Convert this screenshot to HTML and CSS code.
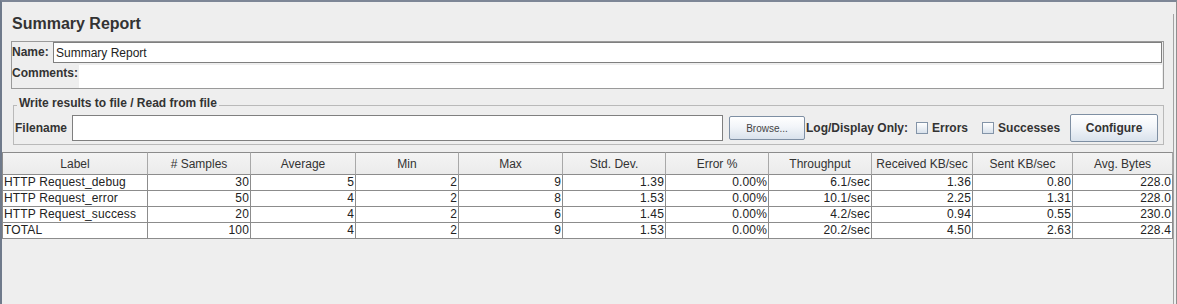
FILE: index.html
```html
<!DOCTYPE html>
<html>
<head>
    <title>Summary Report</title>
    <meta charset="utf-8">
    <link rel="stylesheet" href="styles.css">
</head>
<body>
    <div class="window">
        <div class="content">
            <div class="top-panel">
                <h1 class="title">Summary Report</h1>
                <div class="name-box">
                    <div class="name-row">
                        <label class="field-label name-label">Name:</label>
                        <input type="text" class="name-input" value="Summary Report">
                    </div>
                    <div class="comments-row">
                        <label class="field-label comments-label">Comments:</label>
                        <div class="comments-field"></div>
                    </div>
                </div>
                <fieldset class="file-box">
                    <legend>Write results to file / Read from file</legend>
                    <div class="file-row">
                        <label class="field-label file-label">Filename</label>
                        <input type="text" class="file-input">
                        <button class="btn browse-btn">Browse...</button>
                        <span class="field-label log-label">Log/Display Only:</span>
                        <label class="check errors-check"><span class="check-box"></span>Errors</label>
                        <label class="check success-check"><span class="check-box"></span>Successes</label>
                        <button class="btn configure-btn">Configure</button>
                    </div>
                </fieldset>
            </div>

            <div class="table-pane">
                <table class="results">
                    <colgroup>
                        <col style="width: 146px">
                        <col style="width: 103px">
                        <col style="width: 105px">
                        <col style="width: 103px">
                        <col style="width: 104px">
                        <col style="width: 103px">
                        <col style="width: 103px">
                        <col style="width: 103px">
                        <col style="width: 101px">
                        <col style="width: 100px">
                        <col style="width: 100px">
                    </colgroup>
                    <thead>
                        <tr>
                            <th>Label</th>
                            <th># Samples</th>
                            <th>Average</th>
                            <th>Min</th>
                            <th>Max</th>
                            <th>Std. Dev.</th>
                            <th>Error %</th>
                            <th>Throughput</th>
                            <th>Received KB/sec</th>
                            <th>Sent KB/sec</th>
                            <th>Avg. Bytes</th>
                        </tr>
                    </thead>
                    <tbody>
                        <tr>
                            <td class="label-cell">HTTP Request_debug</td>
                            <td>30</td><td>5</td><td>2</td><td>9</td><td>1.39</td>
                            <td>0.00%</td><td>6.1/sec</td><td>1.36</td><td>0.80</td><td>228.0</td>
                        </tr>
                        <tr>
                            <td class="label-cell">HTTP Request_error</td>
                            <td>50</td><td>4</td><td>2</td><td>8</td><td>1.53</td>
                            <td>0.00%</td><td>10.1/sec</td><td>2.25</td><td>1.31</td><td>228.0</td>
                        </tr>
                        <tr>
                            <td class="label-cell">HTTP Request_success</td>
                            <td>20</td><td>4</td><td>2</td><td>6</td><td>1.45</td>
                            <td>0.00%</td><td>4.2/sec</td><td>0.94</td><td>0.55</td><td>230.0</td>
                        </tr>
                        <tr>
                            <td class="label-cell">TOTAL</td>
                            <td>100</td><td>4</td><td>2</td><td>9</td><td>1.53</td>
                            <td>0.00%</td><td>20.2/sec</td><td>4.50</td><td>2.63</td><td>228.4</td>
                        </tr>
                    </tbody>
                </table>
            </div>
        </div>
    </div>
</body>
</html>
```

FILE: styles.css
```css
* {
    box-sizing: border-box;
}

html, body {
    margin: 0;
    height: 100%;
}

body {
    background: #eeeeee;
    font-family: "Liberation Sans", Arial, sans-serif;
    font-size: 12px;
    color: #333333;
}

.window {
    height: 304px;
    border-top: 2px solid #7d8696;
    border-left: 2px solid #6f7a8b;
    border-right: 1px solid #8f8f8f;
}

.content {
    width: 1172px;
    height: 100%;
    border-right: 1px solid #a3a3a3;
}

.top-panel {
    padding: 0 9px;
}

.title {
    margin: 12px 0 0;
    padding-left: 1px;
    font-size: 16px;
    line-height: 20px;
    font-weight: bold;
    color: #333333;
}

.field-label {
    font-weight: bold;
    color: #333333;
    line-height: 15px;
    white-space: nowrap;
}

/* name / comments box */
.name-box {
    margin-top: 7px;
    border: 1px solid #9a9a9a;
    padding: 0 1px 0 0;
}

.name-row {
    display: flex;
    align-items: center;
    height: 21px;
}

.name-label {
    width: 41px;
    flex-shrink: 0;
}

.name-input {
    flex: 1;
    height: 21px;
    margin: 0;
    padding: 0 2px;
    border: 1px solid #7f7f7f;
    background: #ffffff;
    font-family: inherit;
    font-size: 12px;
    color: #222222;
    outline: none;
}

.comments-row {
    display: flex;
    height: 25px;
}

.comments-label {
    width: 67px;
    flex-shrink: 0;
    padding-top: 3px;
}

.comments-field {
    flex: 1;
    margin-top: 2px;
    height: 23px;
    background: #ffffff;
}

/* file box */
.file-box {
    margin: 7px 0 0 2px;
    padding: 0 3px 2px 1px;
    border: 1px solid #b9b9b9;
    min-width: 0;
}

.file-box legend {
    margin-left: 2px;
    padding: 0 2px 3px;
    font-weight: bold;
    line-height: 15px;
    color: #333333;
}

.file-row {
    display: flex;
    align-items: center;
    height: 28px;
}

.file-label {
    width: 57px;
    flex-shrink: 0;
}

.file-input {
    width: 651px;
    height: 26px;
    margin: 0;
    border: 1px solid #7f7f7f;
    background: #ffffff;
    outline: none;
}

.btn {
    margin: 0;
    padding: 0;
    border: 1px solid #7e8fa3;
    border-radius: 2px;
    background: linear-gradient(#ffffff, #f2f5f9 45%, #d9e2ec);
    font-family: inherit;
    color: #333333;
    cursor: pointer;
}

.browse-btn {
    width: 76px;
    height: 24px;
    margin-left: 6px;
    font-size: 10px;
    color: #444444;
}

.log-label {
    margin-left: 1px;
}

.check {
    display: flex;
    align-items: center;
    gap: 4px;
    font-weight: bold;
    color: #333333;
}

.errors-check {
    margin-left: 8px;
}

.success-check {
    margin-left: 14px;
}

.check-box {
    width: 12px;
    height: 12px;
    border: 1px solid #8394a8;
    background: linear-gradient(#ffffff, #d8e1eb);
}

.configure-btn {
    width: 88px;
    height: 28px;
    margin-left: 10px;
    font-size: 12px;
    font-weight: bold;
}

/* results table */
.table-pane {
    margin-top: 7px;
}

.results {
    width: 1171px;
    table-layout: fixed;
    border-collapse: separate;
    border-spacing: 0;
}

.results th,
.results td {
    padding: 0 1px;
    border-right: 1px solid #8c8c8c;
    border-bottom: 1px solid #8c8c8c;
    white-space: nowrap;
    overflow: hidden;
}

.results th:first-child,
.results td:first-child {
    border-left: 1px solid #8c8c8c;
}

.results th {
    height: 23px;
    border-top: 1px solid #8c8c8c;
    border-right-color: #a8a8a8;
    background: linear-gradient(#f4f4f4, #ebebeb);
    font-weight: normal;
    text-align: center;
    color: #333333;
}

.results td {
    height: 16px;
    line-height: 15px;
    background: #ffffff;
    text-align: right;
    color: #222222;
    letter-spacing: 0.15px;
}

.results td.label-cell {
    text-align: left;
}
```
